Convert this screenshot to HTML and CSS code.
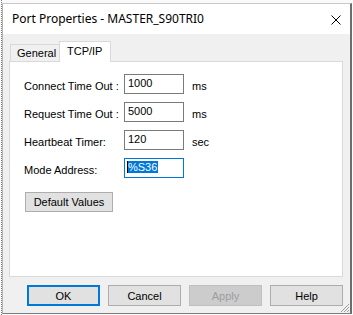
FILE: index.html
```html
<!DOCTYPE html>
<html>
<head>
<meta charset="utf-8">
<link rel="stylesheet" href="styles.css">
</head>
<body>
<div class="screen">
  <div class="window">
    <div class="titlebar">
      <span class="title">Port Properties - MASTER_S90TRI0</span>
      <svg class="close" width="10" height="10" viewBox="0 0 10 10"><path d="M0.5 0.5 L9.5 9.5 M9.5 0.5 L0.5 9.5" stroke="#000" stroke-width="1" fill="none"/></svg>
    </div>
    <div class="dlg">
      <div class="tabs">
        <div class="tab">General</div>
        <div class="tab active">TCP/IP</div>
      </div>
      <div class="panel">
        <div class="row"><span class="label">Connect Time Out :</span><div class="input">1000</div><span class="unit">ms</span></div>
        <div class="row"><span class="label">Request Time Out :</span><div class="input">5000</div><span class="unit">ms</span></div>
        <div class="row"><span class="label">Heartbeat Timer:</span><div class="input">120</div><span class="unit">sec</span></div>
        <div class="row"><span class="label">Mode Address:</span><div class="input focus"><span class="sel">%S36</span></div></div>
        <button class="btn default">Default Values</button>
      </div>
      <div class="actions">
        <button class="btn ok">OK</button>
        <button class="btn">Cancel</button>
        <button class="btn disabled">Apply</button>
        <button class="btn">Help</button>
      </div>
    </div>
    <svg class="grip" width="10" height="10" viewBox="0 0 10 10"><path d="M9 1 L1 9 M9 4 L4 9 M9 7 L7 9" stroke="#a0a0a0" stroke-width="1" fill="none"/></svg>
  </div>
</div>
</body>
</html>
```
FILE: styles.css
```css
html, body {
  margin: 0;
  padding: 0;
}
body {
  background: #fafafa;
  font-family: "Liberation Sans", Arial, sans-serif;
  font-size: 11px;
  color: #000;
  width: 353px;
  height: 315px;
  overflow: hidden;
}
.screen {
  margin-left: 1px;
  border-left: 1px dotted #7a7a7a;
  height: 315px;
  padding-top: 3px;
  box-sizing: border-box;
}
.window {
  position: relative;
  width: 350px;
  height: 311px;
  box-sizing: border-box;
  border-top: 1px solid #c8c8c8;
  border-left: 1px solid #b4b4b4;
  border-right: 2px solid #6d6d6d;
  border-bottom: 1px solid #7d7d7d;
  background: #f0f0f0;
  display: flex;
  flex-direction: column;
}
.titlebar {
  height: 30px;
  background: #fff;
  display: flex;
  align-items: center;
  padding-left: 9px;
  flex-shrink: 0;
}
.title {
  font-family: "Noto Sans", "Open Sans", sans-serif;
  font-size: 12px;
  color: #000;
  padding-bottom: 1px;
}
.close {
  margin-left: auto;
  margin-right: 9px;
  margin-top: 1px;
}
.dlg {
  padding-top: 7px;
}
.tabs {
  display: flex;
  align-items: flex-end;
  height: 20px;
  padding-left: 7px;
}
.tab {
  box-sizing: border-box;
  height: 17px;
  width: 49px;
  border: 1px solid #d9d9d9;
  border-bottom: none;
  border-right: none;
  background: #f0f0f0;
  padding-left: 6px;
  line-height: 15px;
  padding-top: 1px;
}
.tab.active {
  position: relative;
  z-index: 1;
  height: 21px;
  width: 52px;
  margin-bottom: -1px;
  background: #fff;
  border-right: 1px solid #d9d9d9;
  padding-left: 7px;
  padding-top: 2px;
}
.panel {
  margin-left: 6px;
  width: 334px;
  height: 216px;
  box-sizing: border-box;
  border: 1px solid #d9d9d9;
  background: #fff;
  padding: 12px 0 0 14px;
  display: flex;
  flex-direction: column;
  align-items: flex-start;
  gap: 8px;
}
.row {
  display: flex;
  height: 20px;
  align-items: flex-start;
}
.label {
  width: 100px;
  padding-top: 6px;
  line-height: 13px;
}
.input {
  box-sizing: border-box;
  width: 60px;
  height: 20px;
  border: 1px solid #7a7a7a;
  padding: 2px 3px;
  line-height: 13px;
  background: #fff;
}
.input.focus {
  border-color: #0078d7;
  padding-left: 2px;
}
.sel {
  background: #0078d7;
  color: #fff;
  border-left: 1px solid #000;
  padding-right: 1px;
}
.unit {
  margin-left: 8px;
  padding-top: 6px;
  line-height: 13px;
}
.btn {
  font-family: "Liberation Sans", Arial, sans-serif;
  font-size: 11px;
  color: #000;
  background: #e1e1e1;
  border: 1px solid #adadad;
  height: 21px;
  width: 73px;
  padding: 0;
  margin: 0;
  box-sizing: border-box;
}
.btn.default {
  width: 88px;
  height: 20px;
  margin-top: 6px;
  margin-left: 1px;
}
.btn.ok {
  border: 2px solid #0078d7;
}
.btn.disabled {
  background: #cccccc;
  border-color: #bfbfbf;
  color: #9d9d9d;
}
.actions {
  display: flex;
  gap: 8px;
  margin-top: 8px;
  padding-left: 24px;
}
.grip {
  position: absolute;
  right: 0;
  bottom: 0;
}
```
